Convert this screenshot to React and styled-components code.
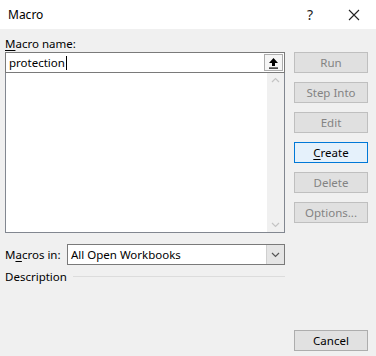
import React from 'react';
import styled, { createGlobalStyle } from 'styled-components';

const Global = createGlobalStyle`
  html, body { margin: 0; padding: 0; }
  body {
    background: #f0f0f0;
    font-family: "Noto Sans", "Open Sans", sans-serif;
    font-size: 11.5px;
    color: #000;
  }
`;

const Dialog = styled.div`
  width: 376px;
  height: 356px;
  display: flex;
  flex-direction: column;
  background: #f0f0f0;
  overflow: hidden;
`;

const TitleBar = styled.div`
  height: 29px;
  background: #fff;
  display: flex;
  align-items: center;
  padding-left: 8px;
  font-size: 12px;
`;

const Title = styled.div`
  flex: 1;
`;

const TitleIcon = styled.div`
  width: 44px;
  display: flex;
  justify-content: center;
  font-size: 14px;
  color: #222;
`;

const Body = styled.div`
  flex: 1;
  display: flex;
  gap: 9px;
  padding: 6px 8px 5px 5px;
`;

const LeftCol = styled.div`
  width: 280px;
  display: flex;
  flex-direction: column;
`;

const Label = styled.div`
  height: 17px;
  line-height: 17px;
  color: #000;
`;

const U = styled.span`
  text-decoration: underline;
  text-underline-offset: 2px;
`;

const InputRow = styled.div`
  height: 19px;
  display: flex;
  border: 1px solid #7a7a7a;
  background: #fff;
`;

const InputText = styled.div`
  flex: 1;
  padding-left: 3px;
  line-height: 19px;
  display: flex;
  align-items: center;
`;

const Caret = styled.span`
  display: inline-block;
  width: 1px;
  height: 14px;
  background: #000;
  margin-left: 1px;
`;

const UpBtn = styled.div`
  width: 19px;
  height: 17px;
  margin: 1px;
  border: 1px solid #adadad;
  background: #f5f5f5;
  box-sizing: border-box;
  display: flex;
  align-items: center;
  justify-content: center;
`;

const List = styled.div`
  height: 159px;
  display: flex;
  border: 1px solid #828790;
  border-top: none;
  background: #fff;
`;

const ListBody = styled.div`
  flex: 1;
`;

const Scroll = styled.div`
  width: 17px;
  background: #f0f0f0;
  display: flex;
  flex-direction: column;
  justify-content: space-between;
  align-items: center;
  padding: 4px 0;
`;

const ComboRow = styled.div`
  margin-top: 11px;
  display: flex;
  align-items: center;
  justify-content: space-between;
`;

const Combo = styled.div`
  width: 216px;
  height: 19px;
  display: flex;
  border: 1px solid #7a7a7a;
  background: #fff;
`;

const ComboText = styled.div`
  flex: 1;
  padding-left: 3px;
  line-height: 19px;
`;

const ComboBtn = styled.div`
  width: 17px;
  background: #e5e5e5;
  border-left: 1px solid #cfcfcf;
  display: flex;
  align-items: center;
  justify-content: center;
`;

const DescRow = styled.div`
  margin-top: 3px;
  display: flex;
  align-items: center;
  gap: 6px;
  height: 17px;
`;

const Rule = styled.div`
  flex: 1;
  height: 1px;
  background: #dcdcdc;
`;

const RightCol = styled.div`
  width: 74px;
  display: flex;
  flex-direction: column;
  padding-top: 17px;
  gap: 9px;
`;

const Button = styled.div`
  height: 21px;
  box-sizing: border-box;
  display: flex;
  align-items: center;
  justify-content: center;
  border: 1px solid ${p => (p.$focus ? '#0078d7' : p.$disabled ? '#bfbfbf' : '#adadad')};
  background: ${p => (p.$focus ? '#e5f1fb' : p.$disabled ? '#e0e0e0' : '#e1e1e1')};
  color: ${p => (p.$disabled ? '#838383' : '#000')};
  ${p => p.$bottom && 'margin-top: auto;'}
`;

const Chevron = ({ up, color = '#c4c4c4' }) => (
  <svg width="9" height="6" viewBox="0 0 9 6">
    <path d={up ? 'M1 5 L4.5 1.5 L8 5' : 'M1 1 L4.5 4.5 L8 1'} fill="none" stroke={color} strokeWidth="1.2" />
  </svg>
);

export default function App() {
  return (
    <Dialog>
      <Global />
      <TitleBar>
        <Title>Macro</Title>
        <TitleIcon>?</TitleIcon>
        <TitleIcon>
          <svg width="12" height="12" viewBox="0 0 12 12">
            <path d="M1 1 L11 11 M11 1 L1 11" stroke="#222" strokeWidth="1.1" />
          </svg>
        </TitleIcon>
      </TitleBar>
      <Body>
        <LeftCol>
          <Label><U>M</U>acro name:</Label>
          <InputRow>
            <InputText>protection<Caret /></InputText>
            <UpBtn>
              <svg width="11" height="12" viewBox="0 0 11 12">
                <path d="M5.5 1 L10 6 L7 6 L7 9 L4 9 L4 6 L1 6 Z" fill="#000" />
                <rect x="1" y="10.5" width="9" height="1.2" fill="#000" />
              </svg>
            </UpBtn>
          </InputRow>
          <List>
            <ListBody />
            <Scroll>
              <Chevron up />
              <Chevron />
            </Scroll>
          </List>
          <ComboRow>
            <span>M<U>a</U>cros in:</span>
            <Combo>
              <ComboText>All Open Workbooks</ComboText>
              <ComboBtn><Chevron color="#555" /></ComboBtn>
            </Combo>
          </ComboRow>
          <DescRow>
            <span>Description</span>
            <Rule />
          </DescRow>
        </LeftCol>
        <RightCol>
          <Button $disabled>Run</Button>
          <Button $disabled>Step Into</Button>
          <Button $disabled>Edit</Button>
          <Button $focus><U>C</U>reate</Button>
          <Button $disabled>Delete</Button>
          <Button $disabled>Options...</Button>
          <Button $bottom>Cancel</Button>
        </RightCol>
      </Body>
    </Dialog>
  );
}
